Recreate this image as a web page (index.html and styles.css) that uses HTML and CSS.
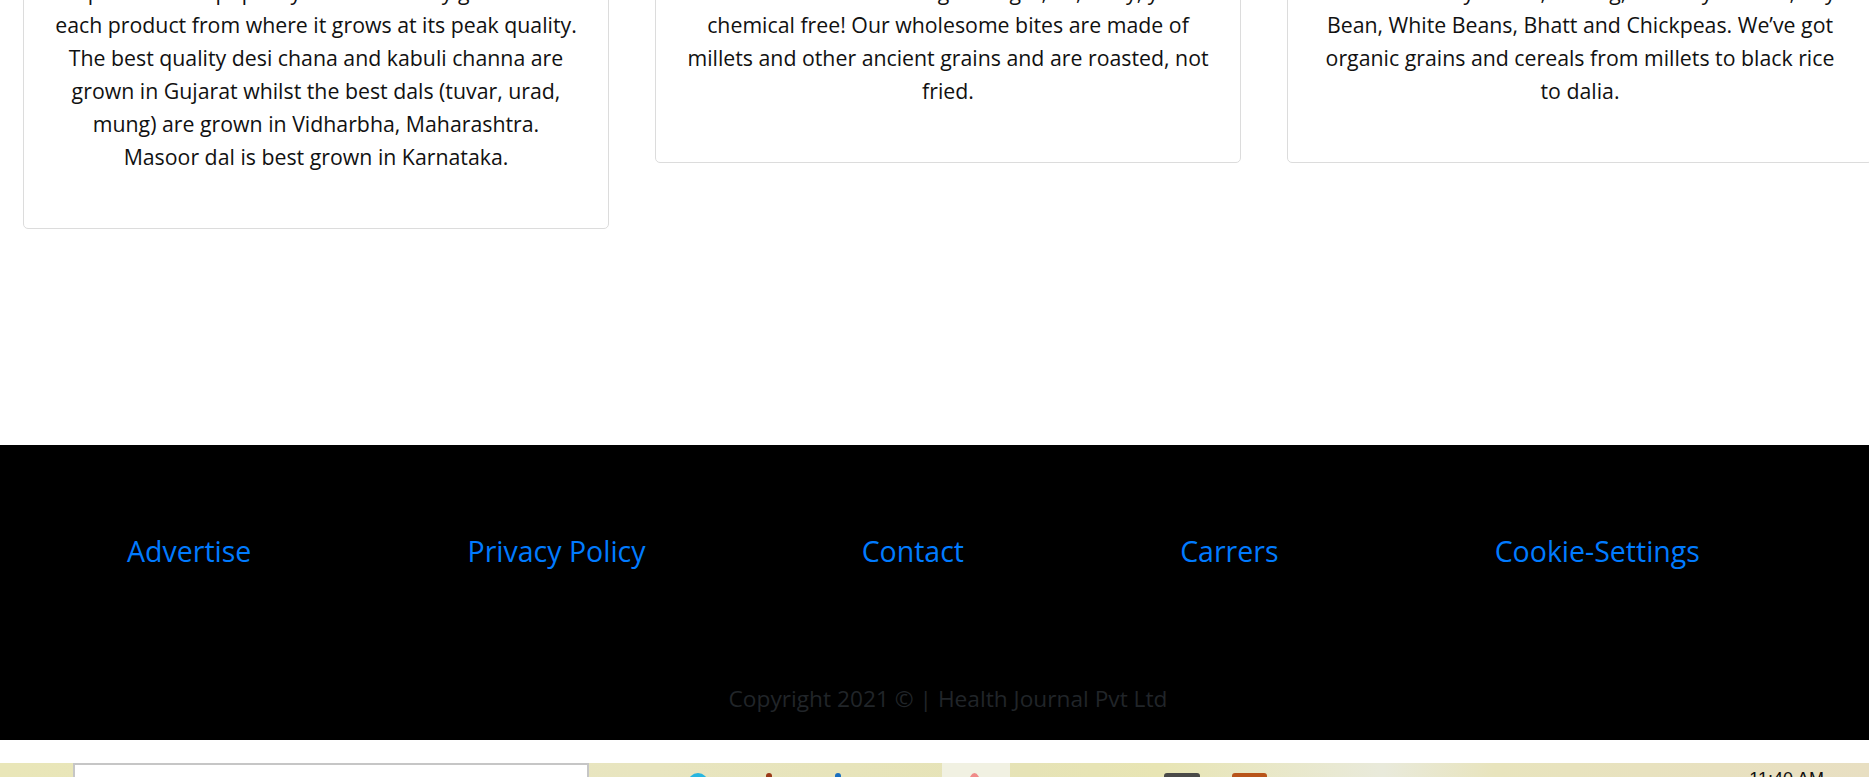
FILE: index.html
```html
<!DOCTYPE html>
<html lang="en">
<head>
<meta charset="utf-8">
<title>Health Journal</title>
<link rel="stylesheet" href="styles.css">
</head>
<body>
<div class="viewport">
  <div class="page">
    <section class="cards">
      <div class="card">
        <p>Our pulses are top quality as we carefully go and source<br>each product from where it grows at its peak quality.<br>The best quality desi chana and kabuli channa are<br>grown in Gujarat whilst the best dals (tuvar, urad,<br>mung) are grown in Vidharbha, Maharashtra.<br>Masoor dal is best grown in Karnataka.</p>
      </div>
      <div class="card">
        <p>Our snacks are made using no sugar, oil, dairy, yet are<br>chemical free! Our wholesome bites are made of<br>millets and other ancient grains and are roasted, not<br>fried.</p>
      </div>
      <div class="card">
        <p>We stock Kidney Beans, Moong, Black Eyed Peas, Soya<br>Bean, White Beans, Bhatt and Chickpeas. We’ve got<br>organic grains and cereals from millets to black rice<br>to dalia.</p>
      </div>
    </section>

    <footer class="footer">
      <nav class="footer-nav">
        <a href="#">Advertise</a>
        <a href="#">Privacy Policy</a>
        <a href="#">Contact</a>
        <a href="#">Carrers</a>
        <a href="#">Cookie-Settings</a>
      </nav>
      <p class="copyright">Copyright 2021 © | Health Journal Pvt Ltd</p>
    </footer>
  </div>

  <div class="taskbar">
    <div class="search-box"></div>
    <span class="tb-icon tb-cyan"></span>
    <span class="tb-icon tb-brown"></span>
    <span class="tb-icon tb-blue"></span>
    <span class="tb-active"><span class="tb-icon tb-pink"></span></span>
    <span class="tb-icon tb-gray"></span>
    <span class="tb-icon tb-orange"></span>
    <span class="tb-clock">11:40 AM</span>
  </div>
</div>
</body>
</html>
```

FILE: styles.css
```css
html, body {
  margin: 0;
  padding: 0;
  background: #fff;
}

.viewport {
  width: 1869px;
  height: 777px;
  overflow: hidden;
  position: relative;
  font-family: "Open Sans", Lato, "Liberation Sans", sans-serif;
}

.page {
  width: 1896px;
}

.cards {
  display: flex;
  align-items: flex-start;
  gap: 46px;
  padding-left: 23px;
  margin-top: -46px;
  padding-bottom: 216px;
}

.card {
  flex: 0 0 586px;
  min-width: 0;
  box-sizing: border-box;
  border: 1px solid #dcdcdc;
  border-radius: 5px;
  padding: 20px 20px 55px;
  text-align: center;
}

.card p {
  margin: 0;
  font-size: 21.3px;
  line-height: 33px;
  color: #111;
  white-space: nowrap;
}

.footer {
  background: #000;
  width: 1869px;
  padding: 89px 0 23px;
  box-sizing: border-box;
  height: 295px;
}

.footer-nav {
  display: flex;
  justify-content: space-around;
  padding: 0 61px 0 19px;
  height: 35px;
  align-items: center;
}

.footer-nav a {
  color: #007bff;
  text-decoration: none;
  font-size: 28.5px;
  line-height: 35px;
}

.copyright {
  margin: 112px 0 0;
  width: 1896px;
  text-align: center;
  font-size: 22.7px;
  line-height: 36px;
  color: #212529;
}

.taskbar {
  margin-top: 23px;
  height: 40px;
  position: relative;
  background: linear-gradient(90deg, #e9e6b8 0%, #e8e5c0 35%, #e6e3b6 55%, #e8e5b4 62%, #e9eadb 74%, #e8e4bd 80%, #e8dfc2 100%);
  display: flex;
  align-items: flex-start;
}

.search-box {
  margin-left: 73px;
  width: 516px;
  height: 40px;
  background: #fff;
  border: 2px solid #c6c6c6;
  border-bottom: none;
  box-sizing: border-box;
}

.tb-icon {
  display: block;
  margin-top: 10px;
  height: 20px;
  border-radius: 3px;
}

.tb-cyan { margin-left: 99px; width: 20px; background: #27b6e0; border-radius: 50%; }
.tb-brown { margin-left: 58px; width: 6px; background: #9a3a18; }
.tb-blue { margin-left: 63px; width: 6px; background: #1a6fc0; }

.tb-active {
  display: block;
  margin-left: 101px;
  width: 68px;
  height: 40px;
  background: #f1f1e2;
}

.tb-pink { margin-left: 27px; width: 11px; background: #f08a88; border-radius: 50%; }
.tb-gray { margin-left: 154px; width: 36px; background: #4a4a48; }
.tb-orange { margin-left: 32px; width: 35px; background: #b8541a; }

.tb-clock {
  margin-left: auto;
  margin-right: 45px;
  margin-top: 6px;
  font-family: "Liberation Sans", sans-serif;
  font-size: 18px;
  color: #111;
}
```
